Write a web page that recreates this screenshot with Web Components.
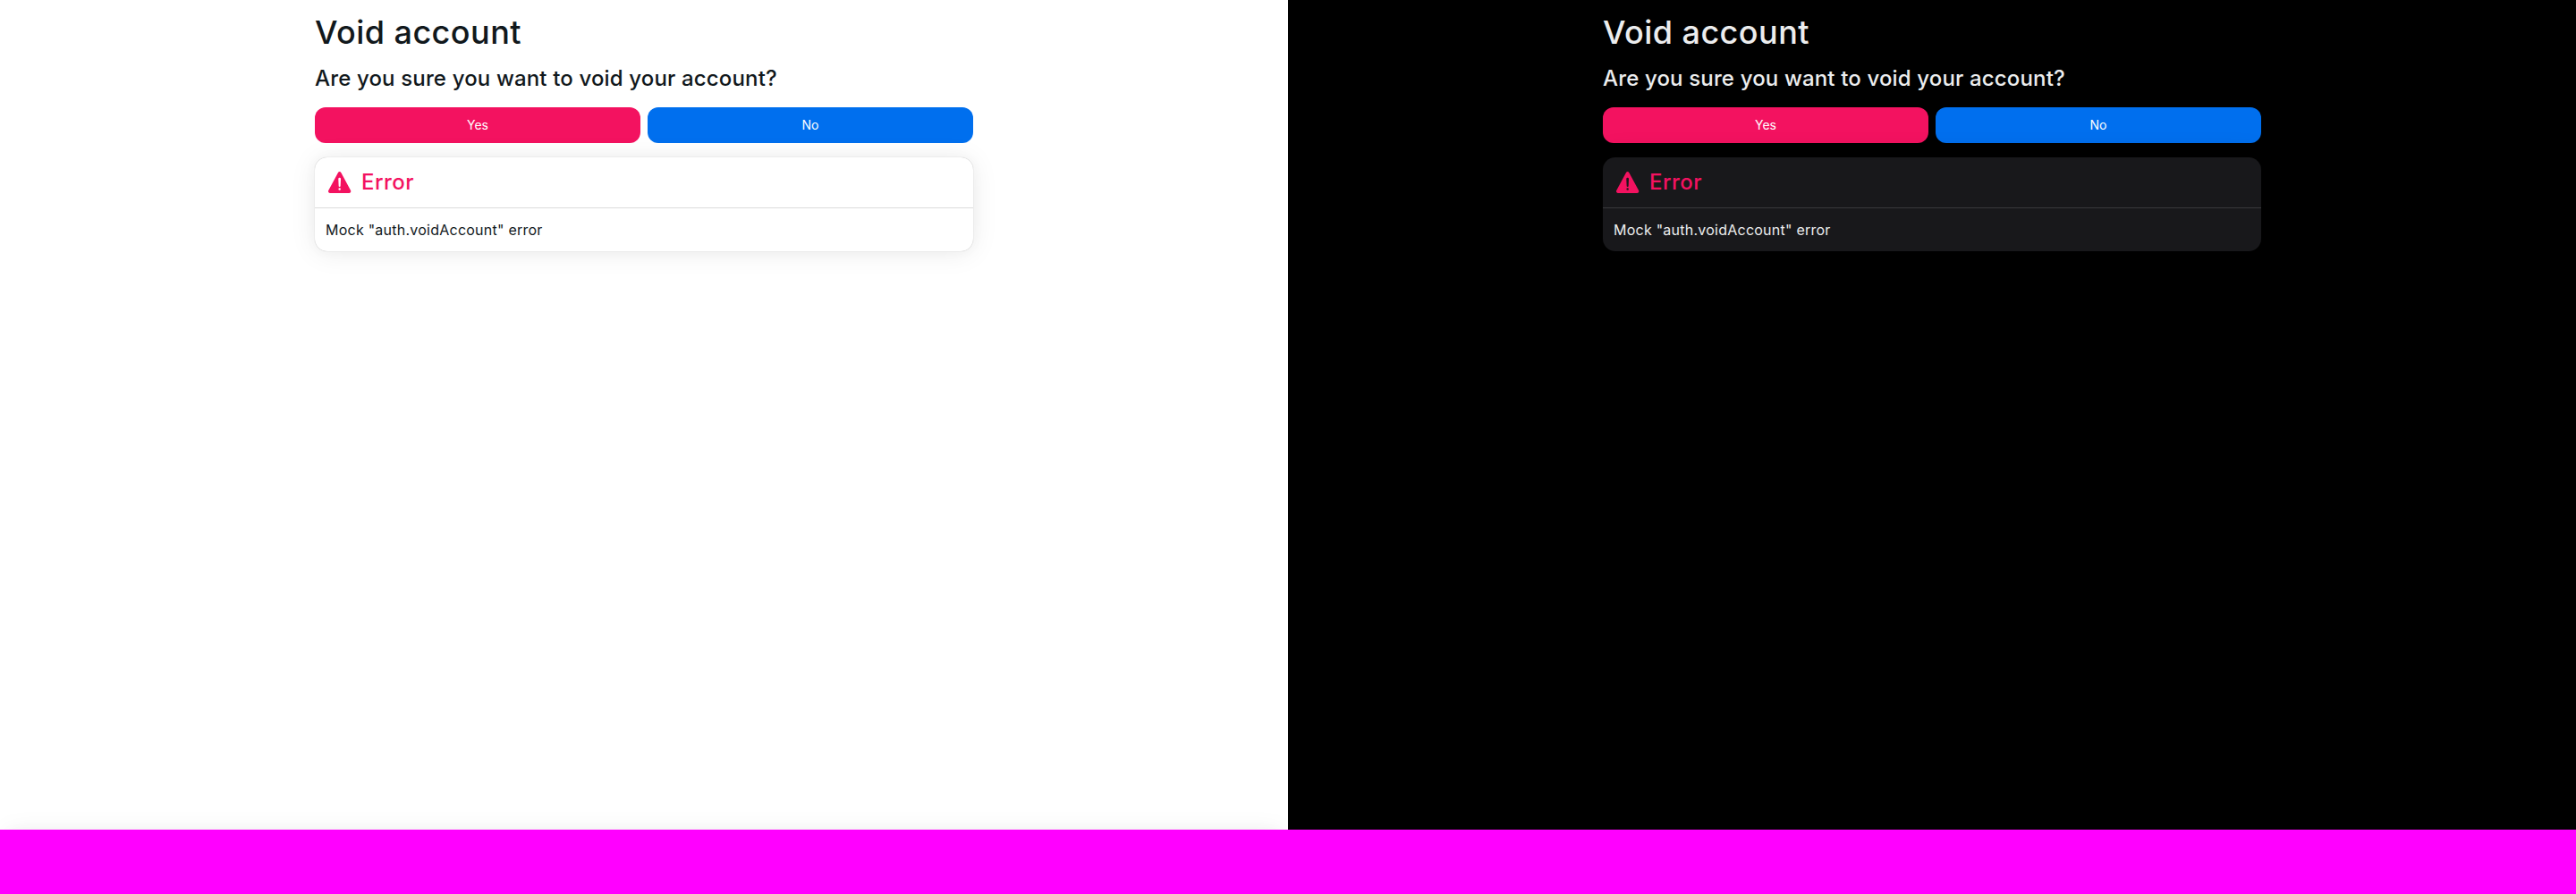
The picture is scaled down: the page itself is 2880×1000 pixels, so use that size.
<!DOCTYPE html>
<html lang="en"><head><meta charset="utf-8"><title>Void account</title>
<style>
html,body{margin:0;height:100%;overflow:hidden}
body{background:#f0f;font-family:Inter,sans-serif;display:flex;align-items:flex-start}
void-page{flex:1}
</style></head><body>
<void-page></void-page><void-page theme="dark"></void-page>
<script>
class UiButton extends HTMLElement{
  constructor(){super();this.attachShadow({mode:'open'}).innerHTML=`<style>
:host{display:block;flex:1;--c:#006fee}
:host([color=danger]){--c:#f31260}
button{all:unset;box-sizing:border-box;display:flex;align-items:center;justify-content:center;width:100%;height:40px;border-radius:12px;background:var(--c);color:#fff;font-size:14px;line-height:20px}
</style><button><slot></slot></button>`}
}
class ErrorCard extends HTMLElement{
  constructor(){super();this.attachShadow({mode:'open'}).innerHTML=`<style>
:host{display:block;background:var(--card);border-radius:14px;box-shadow:var(--shadow);overflow:hidden}
header{display:flex;align-items:center;gap:8px;padding:12px;height:32px;color:#f31260;font-size:24px;line-height:32px;font-weight:480;letter-spacing:.45px}
svg{width:32px;height:32px;display:block}
hr{margin:0;border:0;height:1px;background:var(--line)}
.body{padding:12px;font-size:16px;line-height:24px;letter-spacing:.24px}
</style><header><svg viewBox="0 0 512 512"><path fill="currentColor" d="M449.07 399.08 278.64 82.58c-12.08-22.44-44.26-22.44-56.35 0L51.87 399.08A32 32 0 0 0 80 446.25h340.89a32 32 0 0 0 28.18-47.17zm-198.6-1.83a20 20 0 1 1 20-20 20 20 0 0 1-20 20zm21.72-201.15-5.74 122a16 16 0 0 1-32 0l-5.74-121.95a21.73 21.73 0 0 1 21.5-22.69h.21a21.74 21.74 0 0 1 21.73 22.7z"/></svg><span><slot name="title"></slot></span></header><hr><div class="body"><slot></slot></div>`}
}
class VoidPage extends HTMLElement{
  constructor(){super();this.attachShadow({mode:'open'}).innerHTML=`<style>
:host{display:flex;flex-direction:column;height:928px;overflow:hidden;background:#fff;color:#11181c;--card:#fff;--line:rgba(17,17,17,.15);--shadow:0 0 15px rgba(0,0,0,.03),0 2px 30px rgba(0,0,0,.08),0 0 1px rgba(0,0,0,.3)}
:host([theme=dark]){background:#000;color:#ecedee;--card:#18181b;--line:rgba(255,255,255,.15);--shadow:0 0 15px rgba(0,0,0,.06),0 2px 30px rgba(0,0,0,.22)}
main{flex:1;box-sizing:border-box;width:736px;margin:0 auto;padding-top:16px;display:flex;flex-direction:column;gap:16px}
h1{margin:0;font-size:36px;line-height:40px;font-weight:500;letter-spacing:.45px}
h2{margin:0;font-size:24px;line-height:32px;font-weight:500;letter-spacing:.15px}
.row{display:flex;gap:8px}
footer{flex:none;height:40px;margin:0 8px -42px;box-shadow:var(--shadow)}
</style><main><h1>Void account</h1><h2>Are you sure you want to void your account?</h2><div class="row"><ui-button color="danger">Yes</ui-button><ui-button>No</ui-button></div><error-card><span slot="title">Error</span>Mock "auth.voidAccount" error</error-card></main><footer></footer>`}
}
customElements.define('ui-button',UiButton);customElements.define('error-card',ErrorCard);customElements.define('void-page',VoidPage);
</script></body></html>
